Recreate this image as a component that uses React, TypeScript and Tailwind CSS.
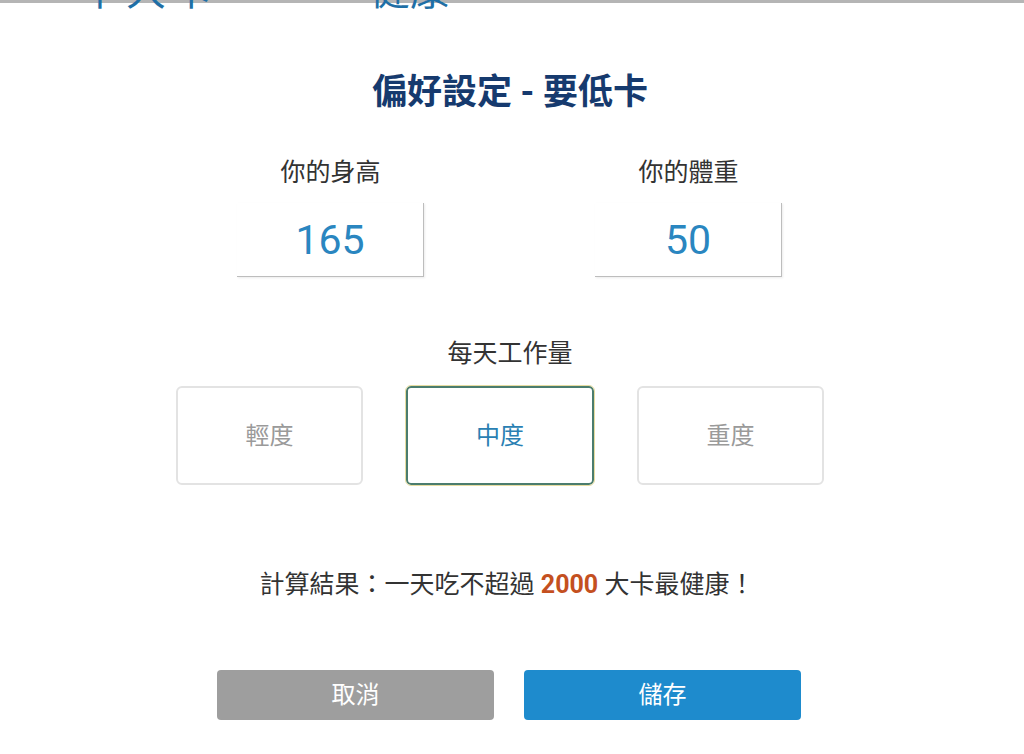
import { useState } from "react";

const font = { fontFamily: 'Roboto, "Noto Sans CJK TC", sans-serif' };

const levels = ["輕度", "中度", "重度"];

export default function App() {
  const [level, setLevel] = useState("中度");
  const [height, setHeight] = useState("165");
  const [weight, setWeight] = useState("50");

  return (
    <div className="w-[1024px] h-[754px] bg-white overflow-hidden" style={font}>
      {/* page behind the sheet, mostly hidden */}
      <div className="relative h-[12px] overflow-hidden">
        <div className="h-[3px] bg-[#b5b5b5]" />
        <div className="absolute left-[80px] top-[-38px] text-[40px] text-[#1f6fa6] tracking-[6px]">
          中大卡
        </div>
        <div className="absolute left-[370px] top-[-38px] text-[40px] text-[#1f6fa6]">
          健康
        </div>
      </div>

      <h1 className="mt-[59px] pr-[4px] text-center text-[35px] font-bold leading-[44px] text-[#163a6e]">
        偏好設定 - 要低卡
      </h1>

      {/* height / weight */}
      <div className="mt-[42px] flex justify-center gap-[171px] pr-[5px]">
        <div className="flex flex-col items-center">
          <div className="text-[25px] leading-[32px] text-[#333]">你的身高</div>
          <input
            value={height}
            onChange={(e) => setHeight(e.target.value)}
            className="mt-[14px] h-[74px] w-[187px] border-r border-b border-[#bdbdbd] text-center text-[41px] text-[#2a86c0] outline-none shadow-[1px_1px_2px_rgba(0,0,0,0.08)]"
          />
        </div>
        <div className="flex flex-col items-center">
          <div className="text-[25px] leading-[32px] text-[#333]">你的體重</div>
          <input
            value={weight}
            onChange={(e) => setWeight(e.target.value)}
            className="mt-[14px] h-[74px] w-[187px] border-r border-b border-[#bdbdbd] text-center text-[41px] text-[#2a86c0] outline-none shadow-[1px_1px_2px_rgba(0,0,0,0.08)]"
          />
        </div>
      </div>

      {/* workload */}
      <div className="mt-[61px] text-center text-[25px] leading-[32px] text-[#333] pr-[4px]">每天工作量</div>
      <div className="mt-[16px] flex justify-center gap-[43px] pr-[24px]">
        {levels.map((l) =>
          l === level ? (
            <button
              key={l}
              onClick={() => setLevel(l)}
              className="h-[99px] w-[188px] rounded-[5px] border-2 border-[#4b7d6e] text-[24px] text-[#2a7fb3] outline outline-1 outline-[#e6dca0]"
            >
              {l}
            </button>
          ) : (
            <button
              key={l}
              onClick={() => setLevel(l)}
              className="h-[99px] w-[187px] rounded-[6px] border-2 border-[#e3e3e3] text-[24px] text-[#9a9a9a]"
            >
              {l}
            </button>
          )
        )}
      </div>

      {/* result */}
      <div className="mt-[84px] pr-[10px] text-center text-[25px] leading-[32px] text-[#333]">
        計算結果：一天吃不超過 <span className="font-bold text-[#c4501f]">2000</span> 大卡最健康！
      </div>

      {/* actions */}
      <div className="mt-[69px] flex justify-center gap-[30px] pr-[6px]">
        <button className="h-[50px] w-[277px] rounded-[4px] bg-[#9e9e9e] text-[24px] text-white">
          取消
        </button>
        <button className="h-[50px] w-[277px] rounded-[4px] bg-[#1e8bcd] text-[24px] text-white">
          儲存
        </button>
      </div>
    </div>
  );
}
